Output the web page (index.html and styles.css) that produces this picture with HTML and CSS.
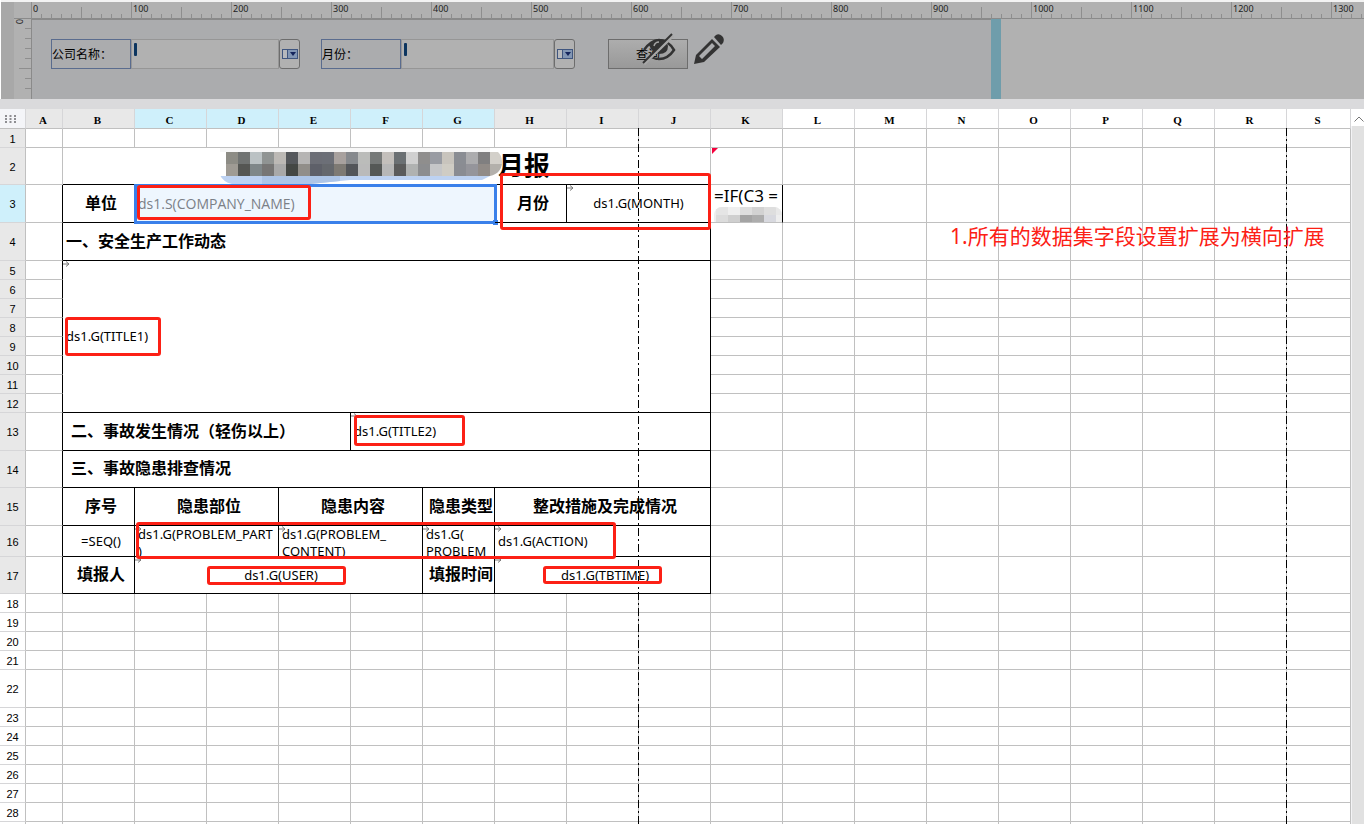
FILE: index.html
```html
<!DOCTYPE html>
<html lang="zh-CN">
<head>
<meta charset="utf-8">
<title>月报</title>
<link rel="stylesheet" href="styles.css">
</head>
<body>
<header class="param-pane">
  <div class="ruler">
    <svg class="ruler-ticks" width="100%" height="17" aria-hidden="true">
      <defs>
        <pattern id="ticks" width="100" height="17" patternUnits="userSpaceOnUse">
          <path d="M.5 0V17M50.5 5V17M10.5 12V17M20.5 12V17M30.5 12V17M40.5 12V17M60.5 12V17M70.5 12V17M80.5 12V17M90.5 12V17" stroke="#8e8e8e" fill="none"/>
        </pattern>
      </defs>
      <rect width="100%" height="17" fill="url(#ticks)"/>
    </svg>
    <div class="ruler-labels" id="ruler"></div>
  </div>
  <div class="pane-row">
    <div class="side-ruler">
      <span class="side-zero">0</span>
      <svg class="side-ticks" width="12" height="80" aria-hidden="true">
        <path d="M6 9.500H12M6 19.500H12M6 29.500H12M6 39.500H12M0 49.500H12M6 59.500H12M6 69.500H12" stroke="#8e8e8e" fill="none"/>
      </svg>
    </div>
    <form class="pane-form">
      <div class="field">
        <label for="company">公司名称：</label>
        <div class="box"><input id="company" type="text"><i class="mark"></i></div>
        <button type="button" class="drop" aria-label="选择公司"><svg width="16" height="10"><rect x=".5" y=".5" width="15" height="9" fill="#b7b9bd" stroke="#40567f"/><rect x="6" y="1" width="9" height="8" fill="#8296b4"/><path d="M5.500 0V10" stroke="#40567f"/><path d="M8 3h6l-3 4z" fill="#14245c"/></svg></button>
      </div>
      <div class="field wide">
        <label for="month">月份：</label>
        <div class="box"><input id="month" type="text"><i class="mark"></i></div>
        <button type="button" class="drop" aria-label="选择月份"><svg width="16" height="10"><rect x=".5" y=".5" width="15" height="9" fill="#b7b9bd" stroke="#40567f"/><rect x="6" y="1" width="9" height="8" fill="#8296b4"/><path d="M5.500 0V10" stroke="#40567f"/><path d="M8 3h6l-3 4z" fill="#14245c"/></svg></button>
      </div>
      <div class="query">
        <button type="button" class="query-btn">查询</button>
        <svg class="tools" width="84" height="34" viewBox="0 0 84 34" aria-hidden="true">
          <path d="M2 17Q9 7 17 7Q26 7 32 17Q26 26 17 26Q13 26 9 24" fill="none" stroke="#333" stroke-width="2.500"/>
          <path d="M7 12Q11 6 18 6Q25 7 26 13Q26 21 17 21Q12 20 9 16Z" fill="#333"/>
          <path d="M12 13Q13 9 17 9" fill="none" stroke="#a4a4a4" stroke-width="1.500"/>
          <path d="M2 31L31 3" stroke="#a8a8a8" stroke-width="3"/>
          <path d="M1 30L30 1" stroke="#333" stroke-width="2"/>
          <path fill-rule="evenodd" d="M52 31L54 22L70 6L78 14L62 29ZM57 23L60 26L73 13L70 10Z" fill="#333"/>
          <path d="M72 4L74 2Q77 0 80 3Q83 6 81 10L79 12Z" fill="#333"/>
        </svg>
      </div>
    </form>
    <div class="pane-edge"></div>
  </div>
</header>

<main class="sheet">
  <div class="grid">
    <table>
      <colgroup id="cols"></colgroup>
      <thead><tr id="heads"></tr></thead>
      <tbody id="rows"></tbody>
    </table>
    <i class="page-line first"></i>
    <i class="page-line second"></i>
    <i class="frame f-company"></i>
    <i class="frame f-month"></i>
    <i class="frame f-title1"></i>
    <i class="frame f-title2"></i>
    <i class="frame f-problem"></i>
    <i class="frame f-user"></i>
    <i class="frame f-time"></i>
    <p class="note">1.所有的数据集字段设置扩展为横向扩展</p>
  </div>
  <div class="scroll">
    <button type="button" class="scroll-up" aria-label="向上滚动"><svg width="10" height="6"><path d="M.5 5.500L5 1L9.500 5.500" fill="none" stroke="#777"/></svg></button>
    <div class="scroll-thumb"></div>
  </div>
</main>
<script src="sheet.js"></script>
</body>
</html>
```

FILE: styles.css
```css
* { box-sizing: border-box; }
body {
  margin: 0;
  height: 100vh;
  display: flex;
  flex-direction: column;
  overflow: hidden;
  background: #fff;
  color: #000;
  font: 13px/17px "Noto Sans", "Noto Sans CJK SC", sans-serif;
}
button, input { font: inherit; margin: 0; padding: 0; }

/* parameter pane */
.param-pane {
  flex: none;
  margin-left: 1px;
  padding-top: 2px;
  background: linear-gradient(#f3f3f3 2px, #a8a8a8 2px);
}
.ruler {
  position: relative;
  margin-left: 13px;
  padding-left: 17px;
  height: 17px;
  background: #b1b1b1;
  border-bottom: 1px solid #8a8a8a;
}
.ruler-ticks { display: block; }
.ruler-labels {
  position: absolute;
  inset: 0 0 auto 18px;
  display: flex;
  font: 9px/14px "Noto Sans", sans-serif;
  color: #222;
}
.ruler-labels span { flex: none; width: 100px; padding-left: 1px; }
.ruler-labels span:last-child { width: auto; }
.pane-row { display: flex; height: 80px; }
.side-ruler {
  position: relative;
  flex: none;
  width: 18px;
  margin-left: 13px;
  background: #b1b1b1;
  border-right: 1px solid #8a8a8a;
}
.side-zero {
  position: absolute;
  left: -1px;
  top: 0;
  font: 9px/13px "Noto Sans", sans-serif;
  writing-mode: vertical-rl;
  color: #222;
}
.side-ticks { display: block; margin-left: 5px; }
.pane-form {
  flex: none;
  width: 959px;
  display: flex;
  align-items: flex-start;
  padding: 20px 0 0 19px;
  background: #abacae;
  border-top: 1px solid #8a8a8a;
  padding-top: 19px;
  font: 12px/28px "Noto Sans CJK SC", sans-serif;
}
.field { display: flex; width: 249px; height: 30px; margin-right: 21px; }
.field.wide { width: 254px; margin-right: 33px; }
.field label { flex: none; width: 80px; border: 1px solid #5a6c8e; }
.box { position: relative; flex: 1; min-width: 0; }
.box input {
  display: block;
  width: 100%;
  height: 30px;
  border: 1px solid #969696;
  background: #b1b1b1;
}
.mark {
  position: absolute;
  left: 3px;
  top: 4px;
  width: 3px;
  height: 13px;
  border-radius: 1px;
  background: #0c355f;
}
.drop {
  flex: none;
  display: flex;
  align-items: center;
  justify-content: center;
  width: 21px;
  border: 1px solid #6d6d6d;
  border-radius: 3px;
  background: #b1b1b1;
}
.query { position: relative; }
.query-btn {
  display: block;
  width: 80px;
  height: 30px;
  border: 1px solid #6d6d6d;
  background: linear-gradient(#adadad, #999);
  color: #000;
}
.tools { position: absolute; left: 34px; top: -6px; }
.pane-edge { flex: 1; border-left: 10px solid #6f9dab; background: #b1b1b1; }

/* sheet */
.sheet {
  flex: 1;
  min-height: 0;
  display: flex;
  border-top: 10px solid #dadadc;
}
.grid { position: relative; flex: 1; min-width: 0; overflow: hidden; }
table {
  width: 100%;
  table-layout: fixed;
  border-collapse: separate;
  border-spacing: 0;
}
.c-head { width: 26px; }
.c-a { width: 37px; }
.c-std { width: 72px; }
th {
  padding: 0;
  border: solid #d6d6d8;
  border-width: 0 1px 1px 0;
  background: #fff;
  font-weight: normal;
}
thead th {
  height: 20px;
  padding: 3px 2px 0 0;
  border-bottom-color: #c0c0c0;
  font: bold 11px/16px "Liberation Serif", serif;
}
tbody th { padding-top: 1px; border-right-color: #c0c0c0; font: 11px/16px "Liberation Sans", sans-serif; }
th.used { background: #e8e8e8; }
th.on { background: #cff0fb; }
th.corner { padding: 0 4px 0 0; background: #f4f5f8; }
.corner svg { display: block; margin: auto; }
td {
  position: relative;
  padding: 0 3px;
  border: solid #c0c0c0;
  border-width: 0 1px 1px 0;
  vertical-align: middle;
  overflow: hidden;
  white-space: nowrap;
}
td.kr { border-right-color: #000; }
td.kb { border-bottom-color: #000; }
td.c { text-align: center; }
td.b { padding-bottom: 4px; font: bold 16px/24px "Noto Sans CJK SC", sans-serif; }
td.in { padding-left: 8px; }
td.tight { padding: 0 1px 4px 0; text-align: right; }
.arrow { position: absolute; left: 0; top: 0; }
.h19 { height: 19px; }
.h31 { height: 31px; }
.h37 { height: 37px; }
.h38 { height: 38px; }
.two-line { height: 30px; overflow: hidden; }
td.selected {
  overflow: visible;
  background: #eef6fe;
  color: #7b8087;
  font: 14px/18px "Open Sans", sans-serif;
}
.selection {
  position: absolute;
  inset: -1px -3px -2px -1px;
  border: 3px solid #3a80ea;
}
.handle {
  position: absolute;
  right: -4px;
  bottom: -3px;
  width: 5px;
  height: 5px;
  background: #3a80ea;
}
.title {
  display: flex;
  justify-content: flex-end;
  height: 36px;
  padding-right: 157px;
  font: bold 26px/32px "Noto Sans CJK SC", sans-serif;
}
.title svg { flex: none; position: relative; z-index: 1; margin-right: -4px; }
.flag {
  position: absolute;
  left: 1px;
  top: 0;
  border: 3px solid;
  border-color: #f5003c transparent transparent #f5003c;
}
.formula { height: 37px; font-size: 17px; line-height: 22px; }
.formula svg { display: block; }

.page-line {
  position: absolute;
  top: 19px;
  bottom: 0;
  width: 1px;
  background: repeating-linear-gradient(#000 0 8px, transparent 8px 11px, #000 11px 13px, transparent 13px 16px);
}
.first { left: 638px; }
.second { left: 1286px; }
.frame { position: absolute; border: 3px solid #fc2015; border-radius: 3px; }
.f-company { left: 137px; top: 76px; width: 174px; height: 35px; }
.f-month { left: 500px; top: 64px; width: 211px; height: 57px; }
.f-title1 { left: 65px; top: 208px; width: 96px; height: 39px; }
.f-title2 { left: 354px; top: 306px; width: 111px; height: 31px; }
.f-problem { left: 136px; top: 413px; width: 480px; height: 37px; }
.f-user { left: 207px; top: 457px; width: 139px; height: 19px; }
.f-time { left: 543px; top: 457px; width: 119px; height: 18px; }
.note {
  position: absolute;
  left: 950px;
  top: 112px;
  margin: 0;
  color: #fc2015;
  font: 21px/30px "Noto Sans", "Noto Sans CJK SC", sans-serif;
  white-space: nowrap;
}
.scroll { flex: none; display: flex; flex-direction: column; width: 13px; background: #f3f3f5; }
.scroll-up { height: 17px; border: 0; padding-left: 2px; background: #fff; }
.scroll-thumb { flex: 1; margin-left: 1px; background: #e1e1e1; }
```

FILE: sheet.js
```js
const letters = "ABCDEFGHIJKLMNOPQRS".split("");
const heights = [19, 37, 38, 38, 19, 19, 19, 19, 19, 19, 19, 19, 38, 37, 38, 31, 37,
  19, 19, 19, 19, 38, 19, 19, 19, 19, 19, 19, 19];

const arrow = '<svg class="arrow" width="7" height="6"><path d="M0 3H6M3 .5L6 3L3 5.500" fill="none" stroke="#777"/></svg>';

function mosaic(colors, perRow, size, x, y) {
  return colors.map((c, i) =>
    `<rect x="${x + (i % perRow) * size}" y="${y + Math.floor(i / perRow) * size}" width="${size}" height="${size}" fill="#${c}"/>`
  ).join("");
}

const titleColors = ("8d8c85 707372 bbc2c4 909493 bcb9b5 55585c b6b5b4 6c6e76 6c6f77 a8a19e 86898d bbbcba 767978 c3bfbb 6b7073 d0d0d0 8f8e8d 999ca3 c8c4bd 8a8d93 acacae 807f80 d3d0ca " +
  "9f9b94 555653 7f8789 777675 a9a9a9 444744 918e89 5e6069 65686d 7e7a74 535559 bababa 555856 b7b7b7 5b5b5b b0b2b1 8c8d8f c5c6c8 cfccc4 8a8c92 95959b 918b87 b3b0ab").split(" ");
const titleArt = `<svg width="282" height="36"><defs><clipPath id="stroke"><path d="M0 0H270Q282 3 282 14T270 28L262 32H130L90 36H12Q3 34 0 27Z"/></clipPath></defs>
<g clip-path="url(#stroke)"><rect y="28" width="282" height="8" fill="#bdd2f2"/><rect x="42" y="28" width="78" height="8" fill="#adc5e7"/><rect width="7" height="28" fill="#fff"/>${mosaic(titleColors, 23, 12, 6, 4)}<rect x="0" y="0" width="270" height="4" fill="#f7f7f7"/></g></svg>`;
const formulaArt = `<svg width="68" height="20"><defs><clipPath id="pill"><rect width="68" height="20" rx="8"/></clipPath></defs><g clip-path="url(#pill)"><rect width="68" height="20" fill="#eee"/>${mosaic("e5e5e5 efefef dedede d2d2d2 dedede e8e8e8 dcdcdc cfcfcf a4a4a4 adadad d8d9df eeeeee".split(" "), 6, 12, 2, -4)}</g></svg>`;

// row -> list of [column index, column span, row span, classes, content]
const cells = {
  2: [[1, 9, 1, "kb", `<div class="title">${titleArt}<span>月报</span></div>`],
      [10, 1, 1, "", '<i class="flag"></i>']],
  3: [[1, 1, 1, "b c kr kb in", "单位"],
      [2, 5, 1, "selected kb", 'ds1.S(COMPANY_NAME)<i class="selection"></i><i class="handle"></i>'],
      [7, 1, 1, "b c kr kb in", "月份"],
      [8, 2, 1, "c kr kb", arrow + "ds1.G(MONTH)"],
      [10, 1, 1, "kr", `<div class="formula">=IF(C3 =${formulaArt}</div>`]],
  4: [[1, 9, 1, "b kr kb", "一、安全生产工作动态"]],
  5: [[1, 9, 8, "kr kb", arrow + "ds1.G(TITLE1)"]],
  13: [[1, 4, 1, "b kr kb in", "二、事故发生情况（轻伤以上）"],
       [5, 5, 1, "kr kb", arrow + "ds1.G(TITLE2)"]],
  14: [[1, 9, 1, "b kr kb in", "三、事故隐患排查情况"]],
  15: [[1, 1, 1, "b c kr kb in", "序号"], [2, 2, 1, "b c kr kb in", "隐患部位"],
       [4, 2, 1, "b c kr kb in", "隐患内容"], [6, 1, 1, "b tight kr kb", "隐患类型"],
       [7, 3, 1, "b c kr kb in", "整改措施及完成情况"]],
  16: [[1, 1, 1, "c kr kb in", "=SEQ()"],
       [2, 2, 1, "kr kb", arrow + '<div class="two-line">ds1.G(PROBLEM_PART<br>)</div>'],
       [4, 2, 1, "kr kb", arrow + '<div class="two-line">ds1.G(PROBLEM_<br>CONTENT)</div>'],
       [6, 1, 1, "kr kb", arrow + '<div class="two-line">ds1.G(<br>PROBLEM</div>'],
       [7, 3, 1, "kr kb", arrow + "ds1.G(ACTION)"]],
  17: [[1, 1, 1, "b c kr kb in", "填报人"], [2, 4, 1, "c kr kb in", arrow + "ds1.G(USER)"],
       [6, 1, 1, "b tight kr kb", "填报时间"], [7, 3, 1, "c kr kb in", arrow + "ds1.G(TBTIME)"]]
};

document.getElementById("cols").innerHTML =
  '<col class="c-head"><col class="c-a">' + '<col class="c-std">'.repeat(17) + "<col>";

const dots = '<svg width="11" height="8"><path d="M0 1H11M0 4H11M0 7H11" stroke="#8e8e92" stroke-width="2" stroke-dasharray="2 2.500"/></svg>';
document.getElementById("heads").innerHTML = `<th class="corner">${dots}</th>` +
  letters.map((l, i) => `<th scope="col" class="${i >= 2 && i <= 6 ? "on" : i <= 10 ? "used" : ""}">${l}</th>`).join("");

document.getElementById("rows").innerHTML = heights.map((h, r) => {
  const n = r + 1;
  const list = cells[n] || [];
  let html = `<tr class="h${h}"><th scope="row" class="${n === 3 ? "on" : n <= 17 ? "used" : ""}">${n < 29 ? n : ""}</th>`;
  for (let c = 0; c < letters.length;) {
    const cell = list.find(x => x[0] === c);
    if (cell) {
      html += `<td colspan="${cell[1]}" rowspan="${cell[2]}" class="${cell[3]}">${cell[4]}</td>`;
      c += cell[1];
    } else if (n > 5 && n < 13 && c === 1) {
      c = 10;
    } else {
      html += `<td class="${c === 0 && n >= 3 && n <= 17 ? "kr" : ""}"></td>`;
      c += 1;
    }
  }
  return html + "</tr>";
}).join("");

document.getElementById("ruler").innerHTML =
  Array.from({ length: 14 }, (_, i) => `<span>${i * 100}</span>`).join("");
```
